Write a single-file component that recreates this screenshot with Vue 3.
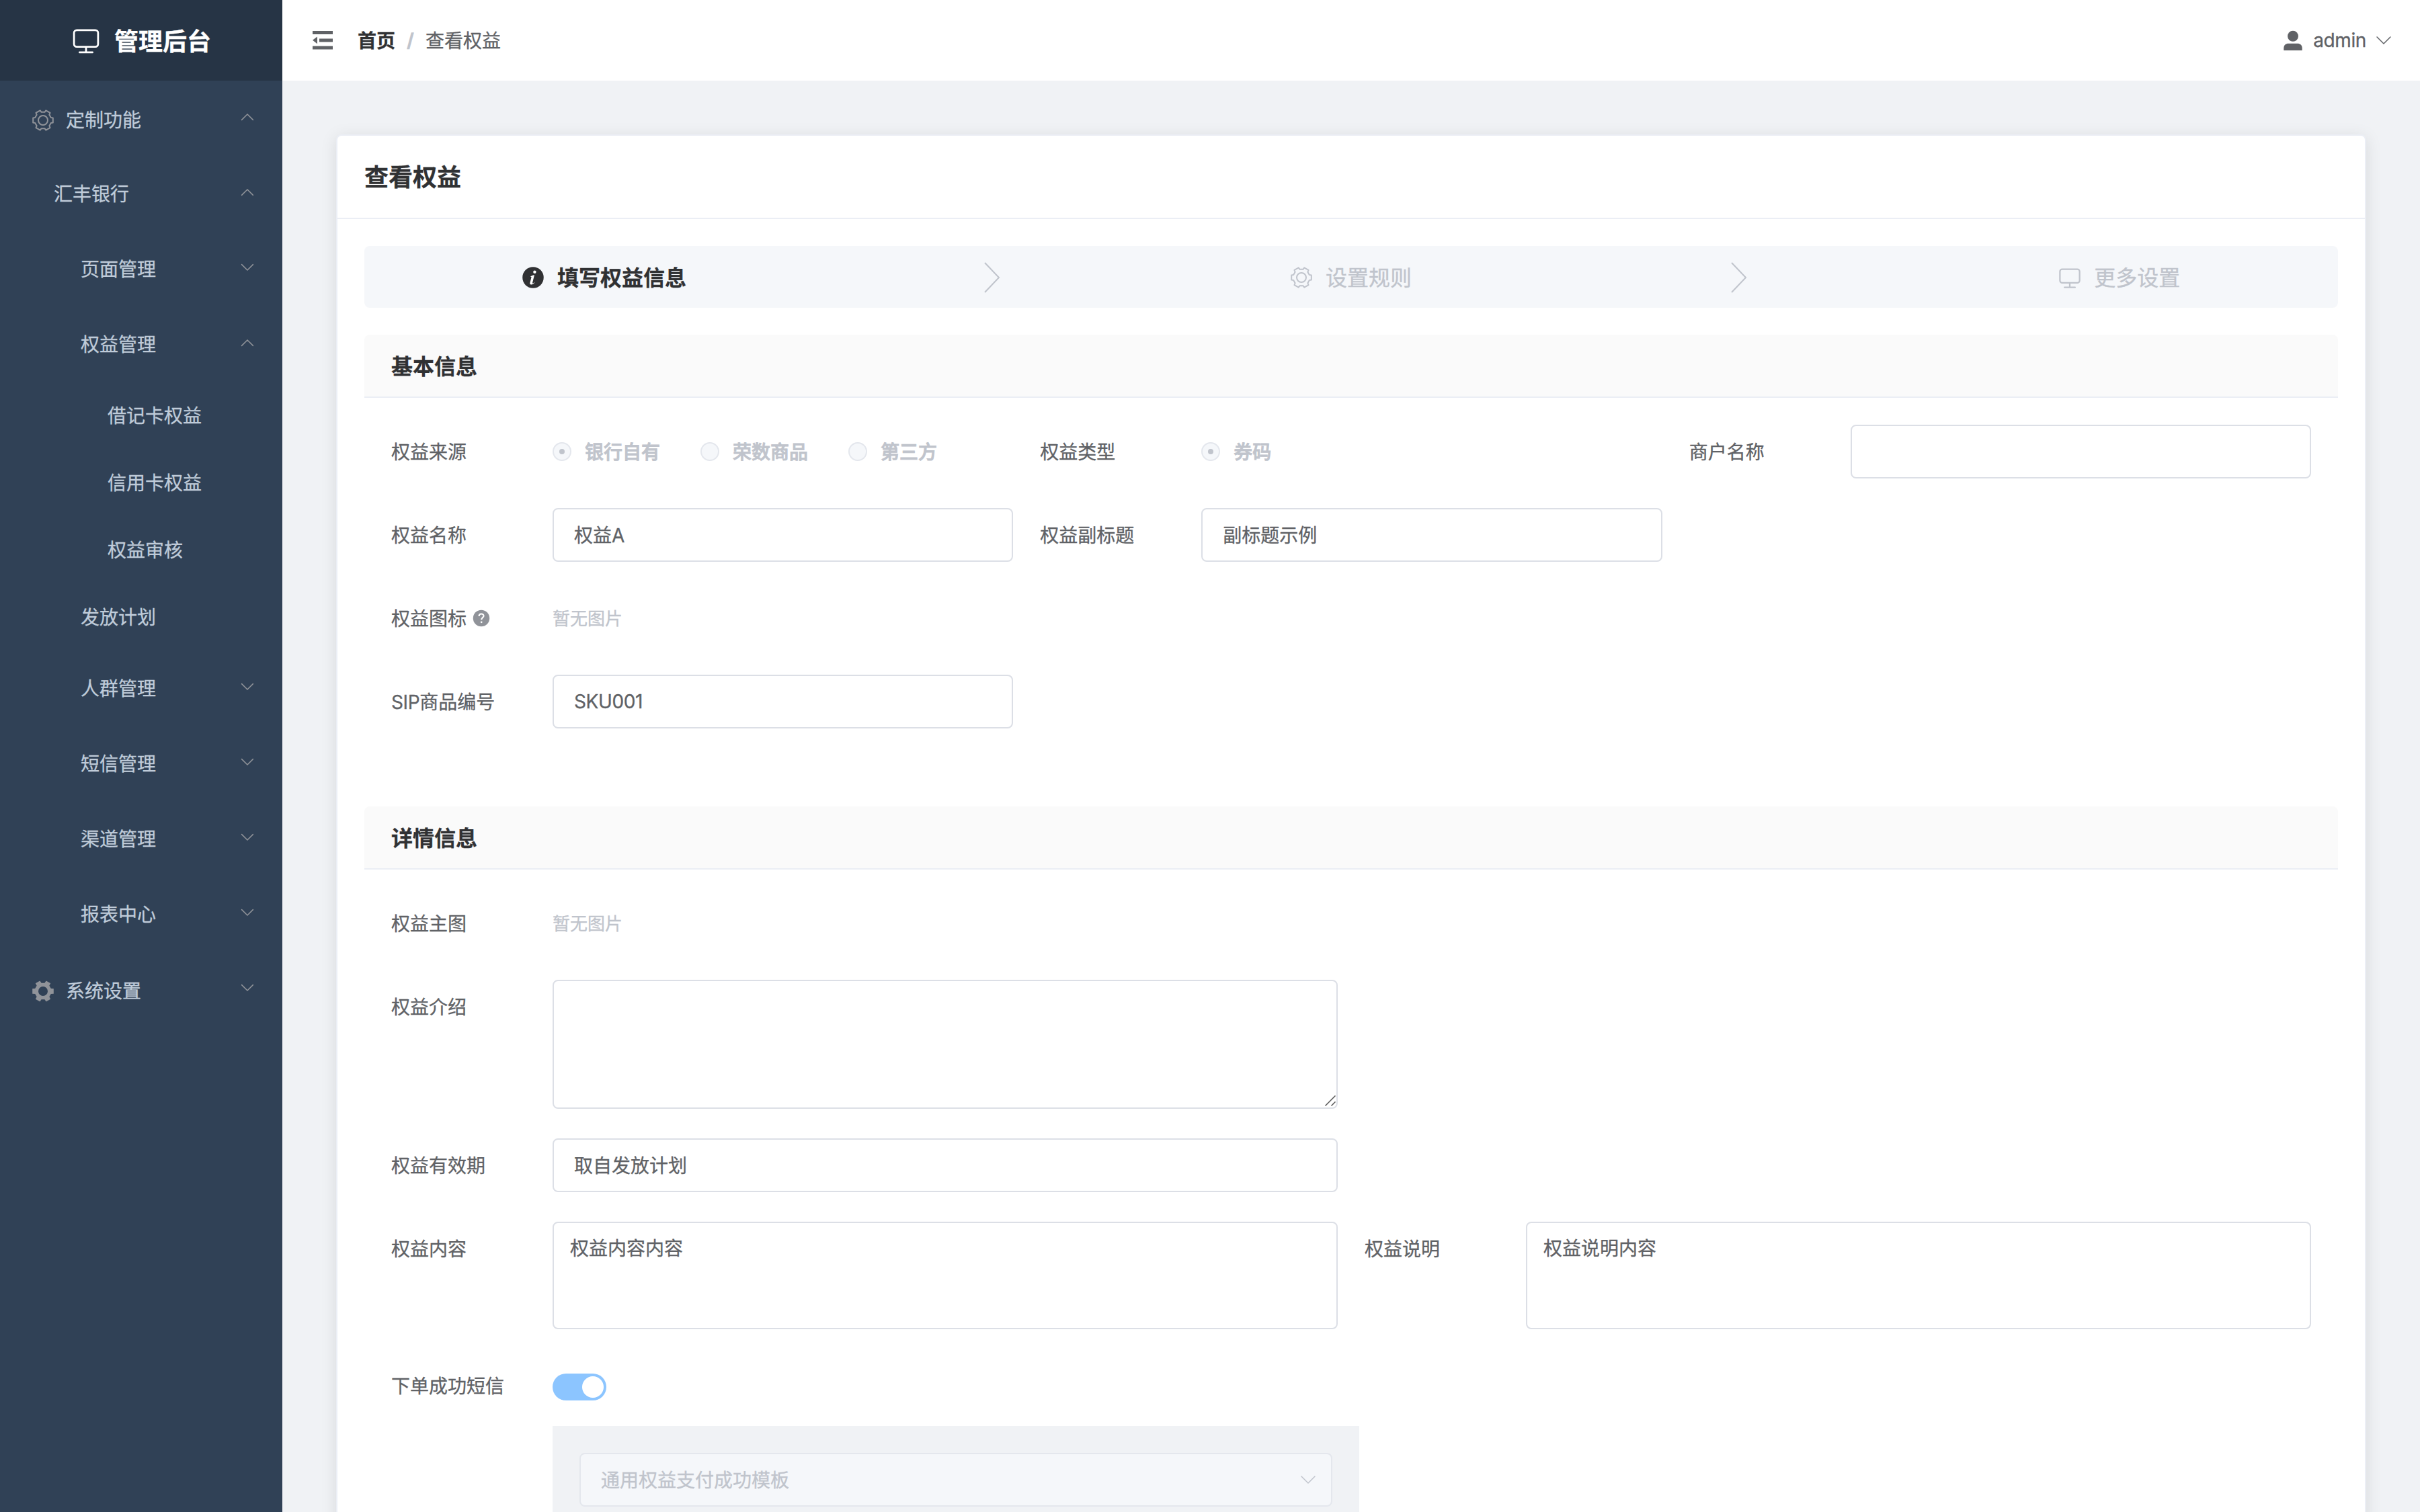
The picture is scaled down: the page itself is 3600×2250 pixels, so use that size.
<template>
  <div class="layout">
    <aside class="sidebar">
      <div class="logo">
        <svg class="logo-icon" viewBox="0 0 1024 1024"><path :d="monitorPath" /></svg>
        <span class="text">管理后台</span>
      </div>
      <ul class="menu">
        <li
          v-for="item in menu"
          :key="item.title"
          class="menu-row"
          :class="['level-' + item.level, { leaf: !item.arrow }]"
        >
          <svg v-if="item.icon" class="menu-icon" viewBox="-18 -18 36 36">
            <template v-if="item.icon === 'gear'">
              <path :d="gearPath" class="line" />
              <circle r="7" class="line" />
            </template>
            <path v-else :d="solidGearPath" fill="currentColor" fill-rule="evenodd" />
          </svg>
          <span class="menu-title text">{{ item.title }}</span>
          <svg
            v-if="item.arrow"
            class="menu-arrow"
            :class="{ open: item.arrow === 'up' }"
            viewBox="0 0 24 24"
          >
            <path d="M3.600 7.600L12 16l8.400-8.400" class="thin" />
          </svg>
        </li>
      </ul>
    </aside>

    <div class="container">
      <header class="navbar">
        <svg class="fold" viewBox="0 0 40 40">
          <path d="M5 6h30v5H5zM15 17.400h20v5H15zM5 28.600h30v5H5zM12 14.400v10.800L5 19.800z" />
        </svg>
        <nav class="breadcrumb">
          <span class="crumb-link text">首页</span>
          <span class="crumb-sep">/</span>
          <span class="text">查看权益</span>
        </nav>
        <div class="user">
          <svg class="user-icon" viewBox="0 0 32 32">
            <circle cx="16" cy="9.800" r="8" />
            <path d="M2.300 30.500V28c0-5 3-7.200 7-7.200h13.400c4 0 7 2.200 7 7.200v2.500q0 .5-.5.5H2.800q-.5 0-.5-.5z" />
          </svg>
          <span class="latin">admin</span>
          <svg class="user-arrow" viewBox="0 0 28 28"><path d="M4 9l10 10L24 9" class="thin" /></svg>
        </div>
      </header>

      <main class="main">
        <section class="card">
          <div class="card-header"><span class="text">查看权益</span></div>
          <div class="card-body">
            <div class="steps">
              <div class="step active">
                <svg class="step-icon" viewBox="-16 -16 32 32">
                  <circle r="15.750" fill="currentColor" />
                  <circle cx="2.400" cy="-8.200" r="2.200" fill="#fff" />
                  <path d="M-4 -1.200C-2.500 -2.800 0 -3.700 2 -3.700L-.8 7.300q-.5 2 1 1.200L2.900 6.800C1 9.400 -1 10.600 -2.800 10.600q-2.500 0-1.700-3L-2.400-.7z" fill="#fff" />
                </svg>
                <span class="step-title text">填写权益信息</span>
                <div class="step-arrow">
                  <svg viewBox="0 0 24 46"><path d="M1 1l21 22L1 45" /></svg>
                </div>
              </div>
              <div class="step">
                <svg class="step-icon" viewBox="-16 -16 32 32">
                  <path :d="gearPath" class="line" />
                  <circle r="7" class="line" />
                </svg>
                <span class="step-title text">设置规则</span>
                <div class="step-arrow">
                  <svg viewBox="0 0 24 46"><path d="M1 1l21 22L1 45" /></svg>
                </div>
              </div>
              <div class="step last">
                <svg class="step-icon" viewBox="57 57 910 910">
                  <path :d="monitorPath" fill="currentColor" />
                </svg>
                <span class="step-title text">更多设置</span>
              </div>
            </div>

            <div class="block">
              <div class="block-header"><span class="text">基本信息</span></div>
              <div class="block-body">
                <div class="row">
                  <div class="col third">
                    <label class="label"><span class="text">权益来源</span></label>
                    <div class="content">
                      <span
                        v-for="source in sources"
                        :key="source.label"
                        class="radio"
                        :class="{ checked: source.checked }"
                      >
                        <i class="radio-inner"></i><span class="text">{{ source.label }}</span>
                      </span>
                    </div>
                  </div>
                  <div class="col third">
                    <label class="label"><span class="text">权益类型</span></label>
                    <div class="content">
                      <span class="radio checked">
                        <i class="radio-inner"></i><span class="text">券码</span>
                      </span>
                    </div>
                  </div>
                  <div class="col third">
                    <label class="label"><span class="text">商户名称</span></label>
                    <div class="content"><div class="input"></div></div>
                  </div>
                </div>
                <div class="row">
                  <div class="col third">
                    <label class="label"><span class="text">权益名称</span></label>
                    <div class="content">
                      <div class="input"><span class="text">权益A</span></div>
                    </div>
                  </div>
                  <div class="col third">
                    <label class="label"><span class="text">权益副标题</span></label>
                    <div class="content">
                      <div class="input"><span class="text">副标题示例</span></div>
                    </div>
                  </div>
                </div>
                <div class="row">
                  <div class="col third">
                    <label class="label">
                      <span class="text">权益图标</span>
                      <svg class="help" viewBox="-14 -14 28 28">
                        <circle r="12.250" fill="currentColor" />
                        <path d="M-3.400 -3c0-4.800 6.900-4.400 6.900-.5C3.500-1 .2-.9 .2 2.200" class="help-mark" />
                        <circle cx=".2" cy="5.800" r="1.400" fill="#fff" />
                      </svg>
                    </label>
                    <div class="content"><span class="no-image text">暂无图片</span></div>
                  </div>
                </div>
                <div class="row">
                  <div class="col third">
                    <label class="label">
                      <span class="text"><span class="latin">SIP</span>商品编号</span>
                    </label>
                    <div class="content">
                      <div class="input"><span class="latin">SKU001</span></div>
                    </div>
                  </div>
                </div>
              </div>
            </div>

            <div class="block second">
              <div class="block-header"><span class="text">详情信息</span></div>
              <div class="block-body">
                <div class="row">
                  <div class="col half">
                    <label class="label"><span class="text">权益主图</span></label>
                    <div class="content"><span class="no-image text">暂无图片</span></div>
                  </div>
                </div>
                <div class="row">
                  <div class="col half">
                    <label class="label"><span class="text">权益介绍</span></label>
                    <div class="content">
                      <div class="textarea">
                        <svg class="resizer" viewBox="0 0 16 16">
                          <path d="M.5 15.500l15-15M9.500 15.500l6-6" />
                        </svg>
                      </div>
                    </div>
                  </div>
                </div>
                <div class="row">
                  <div class="col half">
                    <label class="label"><span class="text">权益有效期</span></label>
                    <div class="content">
                      <div class="input"><span class="text">取自发放计划</span></div>
                    </div>
                  </div>
                </div>
                <div class="row">
                  <div class="col half">
                    <label class="label"><span class="text">权益内容</span></label>
                    <div class="content"><div class="rich-text">权益内容内容</div></div>
                  </div>
                  <div class="col half">
                    <label class="label"><span class="text">权益说明</span></label>
                    <div class="content"><div class="rich-text">权益说明内容</div></div>
                  </div>
                </div>
                <div class="row">
                  <div class="col half">
                    <label class="label"><span class="text">下单成功短信</span></label>
                    <div class="content sms">
                      <div class="switch-line"><span class="switch"></span></div>
                      <div class="sms-panel">
                        <div class="select">
                          <span class="text">通用权益支付成功模板</span>
                          <svg class="select-arrow" viewBox="0 0 28 28">
                            <path d="M4 9l10 10L24 9" class="thin" />
                          </svg>
                        </div>
                      </div>
                    </div>
                  </div>
                </div>
              </div>
            </div>
          </div>
        </section>
      </main>
    </div>
  </div>
</template>

<script setup>
const menu = [
  { title: '定制功能', level: 1, icon: 'gear', arrow: 'up' },
  { title: '汇丰银行', level: 2, arrow: 'up' },
  { title: '页面管理', level: 3, arrow: 'down' },
  { title: '权益管理', level: 3, arrow: 'up' },
  { title: '借记卡权益', level: 4 },
  { title: '信用卡权益', level: 4 },
  { title: '权益审核', level: 4 },
  { title: '发放计划', level: 3 },
  { title: '人群管理', level: 3, arrow: 'down' },
  { title: '短信管理', level: 3, arrow: 'down' },
  { title: '渠道管理', level: 3, arrow: 'down' },
  { title: '报表中心', level: 3, arrow: 'down' },
  { title: '系统设置', level: 1, icon: 'gear-solid', arrow: 'down' },
];

const sources = [
  { label: '银行自有', checked: true },
  { label: '荣数商品', checked: false },
  { label: '第三方', checked: false },
];

// six teeth, the first one pointing right
function gear(outer, body, top, base) {
  const points = [];
  for (let i = 0; i < 6; i++) {
    const a = (i * Math.PI) / 3;
    [
      [body, -base],
      [outer, -top],
      [outer, top],
      [body, base],
    ].forEach(([x, y]) => {
      const px = x * Math.cos(a) - y * Math.sin(a);
      const py = x * Math.sin(a) + y * Math.cos(a);
      points.push(`${px.toFixed(2)} ${py.toFixed(2)}`);
    });
  }
  return `M${points.join('L')}Z`;
}

const gearPath = gear(14.8, 11.8, 3.6, 4);
const solidGearPath = gear(15.8, 11.8, 3.8, 4) + 'M7 0A7 7 0 1 0 -7 0A7 7 0 1 0 7 0Z';

const monitorPath =
  'M544 768v128h192a32 32 0 1 1 0 64H288a32 32 0 1 1 0-64h192V768H192A128 128 0 0 1 64 640V256a128 128 0 0 1 128-128h640a128 128 0 0 1 128 128v384a128 128 0 0 1-128 128H544zM192 192a64 64 0 0 0-64 64v384a64 64 0 0 0 64 64h640a64 64 0 0 0 64-64V256a64 64 0 0 0-64-64H192z';
</script>

<style>
body {
  overflow: hidden;
}
</style>

<style scoped>
.layout {
  display: flex;
  height: 2250px;
  overflow: hidden;
  font-family: Inter, 'Noto Sans CJK SC', sans-serif;
  font-size: 28px;
  color: #606266;
  background: #f0f2f5;
  -webkit-text-stroke-width: 0.3px;
}

.layout * {
  box-sizing: border-box;
}

svg {
  display: block;
  flex: none;
}

/* lifts chinese glyphs onto the optical middle of their row */
.text {
  padding-bottom: 3px;
}

.latin {
  letter-spacing: -0.4px;
}

.line {
  fill: none;
  stroke: currentColor;
  stroke-width: 2;
  stroke-linejoin: round;
}

.thin {
  fill: none;
  stroke: currentColor;
  stroke-width: 1.5;
  stroke-linecap: round;
}

.sidebar {
  flex: none;
  width: 420px;
  background: #304156;
}

.logo {
  display: flex;
  align-items: center;
  justify-content: center;
  gap: 20px;
  height: 120px;
  font-size: 36px;
  font-weight: 700;
  color: #fff;
  background: #263445;
}

.logo-icon {
  width: 44px;
  height: 44px;
  fill: #fff;
}

.menu {
  margin: 0;
  padding: 0;
  list-style: none;
}

.menu-row {
  display: flex;
  align-items: center;
  height: 112px;
  padding-right: 40px;
  color: #bfcbd9;
}

.menu-row.leaf {
  height: 100px;
}

.level-1 {
  padding-left: 46px;
}

.level-2 {
  padding-left: 80px;
}

.level-3 {
  padding-left: 120px;
}

.level-4 {
  padding-left: 160px;
}

.level-1 .menu-icon,
.level-1 .menu-title {
  margin-top: 5px;
}

.menu-icon {
  width: 36px;
  height: 36px;
  margin-right: 16px;
  color: #909399;
}

.menu-title {
  flex: 1;
}

.menu-arrow {
  width: 24px;
  height: 24px;
  margin-top: -4px;
  color: #909399;
}

.menu-arrow.open {
  transform: rotate(180deg);
}

.container {
  flex: 1;
  min-width: 0;
}

.navbar {
  display: flex;
  align-items: center;
  height: 120px;
  padding: 0 40px;
  background: #fff;
}

.fold {
  width: 40px;
  height: 40px;
  margin-right: 32px;
  fill: #606266;
}

.breadcrumb {
  display: flex;
  align-items: center;
}

.crumb-link {
  font-weight: 700;
  color: #303133;
}

.crumb-sep {
  margin: 0 17px;
  font-weight: 700;
  color: #c0c4cc;
}

.user {
  display: flex;
  align-items: center;
  margin-left: auto;
}

.user-icon {
  width: 32px;
  height: 32px;
  margin-right: 14px;
  fill: #606266;
}

.user-arrow {
  width: 28px;
  height: 28px;
  margin-left: 12px;
}

.main {
  padding: 80px;
}

.card {
  height: 2400px;
  border: 2px solid #ebeef5;
  border-radius: 8px;
  background: #fff;
  box-shadow: 0 4px 24px rgba(0, 0, 0, 0.1);
}

.card-header {
  display: flex;
  align-items: center;
  height: 124px;
  padding: 0 40px 2px;
  border-bottom: 2px solid #ebeef5;
  font-size: 36px;
  font-weight: 700;
  color: #303133;
}

.card-body {
  padding: 40px;
}

.steps {
  display: flex;
  height: 92px;
  padding: 0 8%;
  border-radius: 8px;
  background: #f5f7fa;
}

.step {
  display: flex;
  flex: 1;
  align-items: center;
  font-size: 32px;
  color: #c0c4cc;
}

.step.last {
  flex: none;
}

.step.active {
  color: #303133;
}

.step.active .step-title {
  font-weight: 700;
}

.step-icon {
  width: 32px;
  height: 32px;
  margin-top: 1px;
  margin-right: 20px;
}

.step-arrow {
  display: flex;
  flex: 1;
  justify-content: center;
  padding-top: 1px;
  padding-left: 11px;
}

.step-arrow svg {
  width: 24px;
  height: 46px;
  fill: none;
  stroke: #c0c4cc;
  stroke-width: 2;
}

.block {
  margin-top: 40px;
}

.block.second {
  margin-top: 116px;
}

.block-header {
  display: flex;
  align-items: center;
  height: 94px;
  padding: 0 40px;
  border-bottom: 2px solid #ebeef5;
  border-radius: 8px 8px 0 0;
  font-size: 32px;
  font-weight: 700;
  color: #303133;
  background: #fafafa;
}

.block-body {
  display: flex;
  flex-direction: column;
  gap: 44px;
  padding: 40px 20px 0;
}

.row {
  display: flex;
}

.col {
  display: flex;
  flex: none;
  padding: 0 20px;
}

.col.third {
  width: 33.3333%;
}

.col.half {
  width: 50%;
}

.label {
  display: flex;
  flex: none;
  align-items: center;
  width: 240px;
  height: 80px;
}

.help {
  width: 28px;
  height: 28px;
  margin-left: 8px;
  color: #909399;
}

.help-mark {
  fill: none;
  stroke: #fff;
  stroke-width: 2.2;
}

.content {
  display: flex;
  flex: 1;
  align-items: center;
  min-width: 0;
  min-height: 80px;
}

.input {
  display: flex;
  align-items: center;
  width: 100%;
  height: 80px;
  padding: 0 30px;
  border: 2px solid #dcdfe6;
  border-radius: 8px;
  background: #fff;
}

.radio {
  display: flex;
  align-items: center;
  margin-right: 60px;
  font-weight: 500;
  color: #c0c4cc;
  -webkit-text-stroke-width: 0.9px;
}

.radio-inner {
  display: flex;
  align-items: center;
  justify-content: center;
  width: 28px;
  height: 28px;
  margin-right: 20px;
  border: 2px solid #e4e7ed;
  border-radius: 50%;
  background: #f5f7fa;
}

.radio.checked .radio-inner::after {
  content: '';
  width: 8px;
  height: 8px;
  border-radius: 50%;
  background: #c0c4cc;
}

.no-image {
  font-size: 26px;
  color: #c0c4cc;
}

.textarea {
  position: relative;
  width: 100%;
  height: 192px;
  border: 2px solid #dcdfe6;
  border-radius: 8px;
}

.resizer {
  position: absolute;
  right: 1px;
  bottom: 2px;
  width: 16px;
  height: 16px;
  fill: none;
  stroke: #555;
  stroke-width: 1.5;
}

.rich-text {
  width: 100%;
  height: 160px;
  padding: 16px 24px;
  border: 2px solid #dcdfe6;
  border-radius: 8px;
  line-height: 44px;
}

.content.sms {
  flex-direction: column;
  align-items: flex-start;
}

.switch-line {
  display: flex;
  align-items: center;
  height: 84px;
}

.switch {
  display: flex;
  justify-content: flex-end;
  width: 80px;
  height: 40px;
  padding: 4px;
  border-radius: 20px;
  background: #8cc5ff;
}

.switch::after {
  content: '';
  width: 32px;
  height: 32px;
  border-radius: 50%;
  background: #fff;
}

.sms-panel {
  flex: none;
  width: 1200px;
  height: 300px;
  margin-top: 16px;
  padding: 40px;
  background: #f0f2f5;
}

.select {
  display: flex;
  align-items: center;
  justify-content: space-between;
  height: 80px;
  padding: 0 20px 0 30px;
  border: 2px solid #e4e7ed;
  border-radius: 8px;
  color: #c0c4cc;
  background: #f5f7fa;
}

.select-arrow {
  width: 28px;
  height: 28px;
}
</style>
